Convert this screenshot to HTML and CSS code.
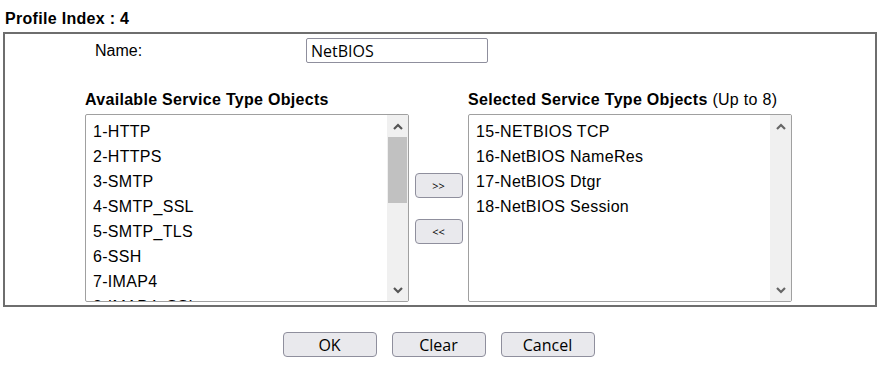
FILE: index.html
```html
<!DOCTYPE html>
<html>

<head>
    <meta charset="UTF-8">
    <title>Service Type Group</title>
    <link rel="stylesheet" href="styles.css">
</head>

<body>

    <div class="title">Profile Index : 4</div>

    <div class="panel">
        <div class="name-row">
            <label class="name-label" for="profileName">Name:</label>
            <input class="name-input" id="profileName" value="NetBIOS">
        </div>

        <div class="lists">
            <div class="col-title">Available Service Type Objects</div>
            <div class="col-title col-right">Selected Service Type Objects <span class="normal">(Up to 8)</span></div>

            <div class="listbox">
                <div class="items">
                    <div class="item">1-HTTP</div>
                    <div class="item">2-HTTPS</div>
                    <div class="item">3-SMTP</div>
                    <div class="item">4-SMTP_SSL</div>
                    <div class="item">5-SMTP_TLS</div>
                    <div class="item">6-SSH</div>
                    <div class="item">7-IMAP4</div>
                    <div class="item">8-IMAP4_SSL</div>
                </div>
                <div class="scrollbar">
                    <div class="arrow">
                        <svg width="10" height="7" viewBox="0 0 10 7"><polyline points="1,6 5,2 9,6" fill="none" stroke="#555" stroke-width="2.2"/></svg>
                    </div>
                    <div class="thumb"></div>
                    <div class="track"></div>
                    <div class="arrow">
                        <svg width="10" height="7" viewBox="0 0 10 7"><polyline points="1,1 5,5 9,1" fill="none" stroke="#555" stroke-width="2.2"/></svg>
                    </div>
                </div>
            </div>

            <div class="moves">
                <button class="btn move" type="button">&gt;&gt;</button>
                <button class="btn move" type="button">&lt;&lt;</button>
            </div>

            <div class="listbox">
                <div class="items">
                    <div class="item">15-NETBIOS TCP</div>
                    <div class="item">16-NetBIOS NameRes</div>
                    <div class="item">17-NetBIOS Dtgr</div>
                    <div class="item">18-NetBIOS Session</div>
                </div>
                <div class="scrollbar">
                    <div class="arrow">
                        <svg width="10" height="7" viewBox="0 0 10 7"><polyline points="1,6 5,2 9,6" fill="none" stroke="#666" stroke-width="2.2"/></svg>
                    </div>
                    <div class="track"></div>
                    <div class="arrow">
                        <svg width="10" height="7" viewBox="0 0 10 7"><polyline points="1,1 5,5 9,1" fill="none" stroke="#666" stroke-width="2.2"/></svg>
                    </div>
                </div>
            </div>
        </div>
    </div>

    <div class="actions">
        <button class="btn action" type="button">OK</button>
        <button class="btn action" type="button">Clear</button>
        <button class="btn action" type="button">Cancel</button>
    </div>

</body>

</html>
```

FILE: styles.css
```css
body {
    font-family: "Liberation Sans", Arial, sans-serif;
    font-size: 16px;
    color: #000;
    background-color: #fff;
    margin: 0;
    padding: 9px 0 0 3px;
}

.title {
    font-weight: bold;
    line-height: 20px;
    letter-spacing: 0.3px;
    padding-left: 2px;
    margin-bottom: 3px;
}

.panel {
    box-sizing: border-box;
    width: 874px;
    border: 2px solid #6e6e6e;
    padding: 4px 0 3px 0;
}

.name-row {
    display: flex;
    align-items: center;
    height: 25px;
    padding-left: 90px;
}

.name-label {
    width: 211px;
    line-height: 25px;
}

.name-input {
    box-sizing: border-box;
    width: 182px;
    height: 25px;
    margin: 0;
    padding: 0 4px;
    border: 1px solid #8f8f9d;
    border-radius: 2px;
    font-family: "Open Sans", sans-serif;
    font-size: 16px;
    color: #000;
}

.lists {
    display: grid;
    grid-template-columns: 324px 59px 324px;
    grid-template-rows: 20px 188px;
    row-gap: 4px;
    margin: 27px 0 0 80px;
}

.col-title {
    font-weight: bold;
    line-height: 20px;
    letter-spacing: 0.3px;
    white-space: nowrap;
}

.col-right {
    grid-column: 3;
}

.normal {
    font-weight: normal;
}

.listbox {
    box-sizing: border-box;
    display: flex;
    border: 1px solid #a0a0a0;
    border-radius: 2px;
    overflow: hidden;
}

.items {
    flex: 1;
    overflow: hidden;
    padding-top: 4px;
}

.item {
    line-height: 25px;
    letter-spacing: 0.3px;
    padding-left: 7px;
    white-space: nowrap;
}

.scrollbar {
    width: 21px;
    display: flex;
    flex-direction: column;
    background-color: #f0f0f0;
}

.arrow {
    height: 22px;
    display: flex;
    align-items: center;
    justify-content: center;
}

.thumb {
    height: 66px;
    margin: 0 1px;
    background-color: #c1c1c1;
}

.track {
    flex: 1;
}

.moves {
    display: flex;
    flex-direction: column;
    justify-content: center;
    align-items: center;
    gap: 21px;
}

.btn {
    box-sizing: border-box;
    height: 25px;
    margin: 0;
    padding: 0;
    background-color: #e9e9ed;
    border: 1px solid #8f8f9d;
    border-radius: 4px;
    font-family: "Open Sans", sans-serif;
    color: #000;
}

.move {
    width: 48px;
    font-size: 11px;
}

.action {
    width: 94px;
    font-size: 16px;
}

.actions {
    width: 874px;
    display: flex;
    justify-content: center;
    gap: 15px;
    margin-top: 25px;
    padding-right: 3px;
    box-sizing: border-box;
}
```
